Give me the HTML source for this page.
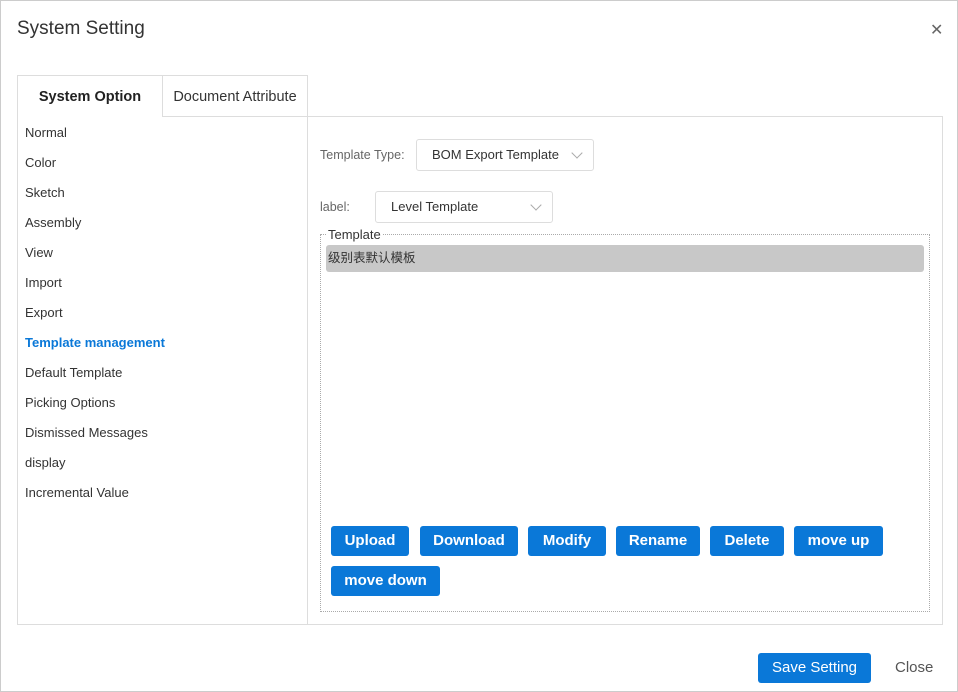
<!DOCTYPE html>
<html><head><style>
*{margin:0;padding:0;box-sizing:border-box}
body{width:958px;height:692px;background:#fff;font-family:"Liberation Sans","Noto Sans CJK SC",sans-serif;position:relative;overflow:hidden;color:#333}
.frame{position:absolute;left:0;top:0;width:958px;height:692px;border:1px solid #ccc}
.abs{position:absolute}
.title{left:17px;top:18px;font-size:19px;color:#333}
.x{left:930px;top:20px;font-size:16px;color:#666}
.tab{height:42px;border:1px solid #ddd;border-bottom:none;font-size:14.5px;text-align:center;line-height:42px;background:#fff}
.left{left:17px;top:116px;width:291px;height:509px;border:1px solid #ddd}
.right{left:307px;top:116px;width:636px;height:509px;border:1px solid #ddd}
.nav{position:absolute;left:7px;font-size:13px;color:#333}
.sel{border:1px solid #ddd;border-radius:3px;font-size:13px;color:#333;padding-left:15px;line-height:30px;height:32px}
.chev{position:absolute;right:12px;top:9px;width:8px;height:8px;border-right:1px solid #aaa;border-bottom:1px solid #aaa;transform:rotate(45deg)}
.btn{position:absolute;height:30px;background:#0a78d8;color:#fff;font-weight:bold;font-size:15px;text-align:center;line-height:30px;border-radius:3px}
</style></head><body>
<div class="frame"></div>
<div class="abs title">System Setting</div>
<div class="abs x">✕</div>
<div class="abs left">
<div class="nav" style="top:8px">Normal</div>
<div class="nav" style="top:38px">Color</div>
<div class="nav" style="top:68px">Sketch</div>
<div class="nav" style="top:98px">Assembly</div>
<div class="nav" style="top:128px">View</div>
<div class="nav" style="top:158px">Import</div>
<div class="nav" style="top:188px">Export</div>
<div class="nav" style="top:218px;color:#0a78d8;font-weight:bold">Template management</div>
<div class="nav" style="top:248px">Default Template</div>
<div class="nav" style="top:278px">Picking Options</div>
<div class="nav" style="top:308px">Dismissed Messages</div>
<div class="nav" style="top:338px">display</div>
<div class="nav" style="top:368px">Incremental Value</div>
</div>
<div class="abs right"></div>
<div class="abs tab" style="left:17px;top:75px;width:146px;height:42px;font-weight:bold;color:#222">System Option</div>
<div class="abs tab" style="left:162px;top:75px;width:146px;border-bottom:1px solid #ddd">Document Attribute</div>
<div class="abs" style="left:320px;top:148px;font-size:12.5px;color:#666">Template Type:</div>
<div class="abs sel" style="left:416px;top:139px;width:178px">BOM Export Template<span class="chev"></span></div>
<div class="abs" style="left:320px;top:200px;font-size:12.5px;color:#666">label:</div>
<div class="abs sel" style="left:375px;top:191px;width:178px">Level Template<span class="chev"></span></div>
<div class="abs" style="left:320px;top:234px;width:610px;height:378px;border:1px dotted #aaa"></div>
<div class="abs" style="left:326px;top:227px;background:#fff;padding:0 2px;font-size:13px;color:#333">Template</div>
<div class="abs" style="left:326px;top:245px;width:598px;height:27px;background:#c8c8c8;border-radius:3px;font-size:12.5px;line-height:27px;padding-left:2px;color:#333">级别表默认模板</div>
<div class="btn" style="left:331px;top:526px;width:78px">Upload</div>
<div class="btn" style="left:420px;top:526px;width:98px">Download</div>
<div class="btn" style="left:528px;top:526px;width:78px">Modify</div>
<div class="btn" style="left:616px;top:526px;width:84px">Rename</div>
<div class="btn" style="left:710px;top:526px;width:74px">Delete</div>
<div class="btn" style="left:794px;top:526px;width:89px">move up</div>
<div class="btn" style="left:331px;top:566px;width:109px">move down</div>
<div class="btn" style="left:758px;top:653px;width:113px;height:30px;font-weight:normal;font-size:15px;line-height:30px">Save Setting</div>
<div class="abs" style="left:895px;top:659px;font-size:15px;color:#555">Close</div>
</body></html>
